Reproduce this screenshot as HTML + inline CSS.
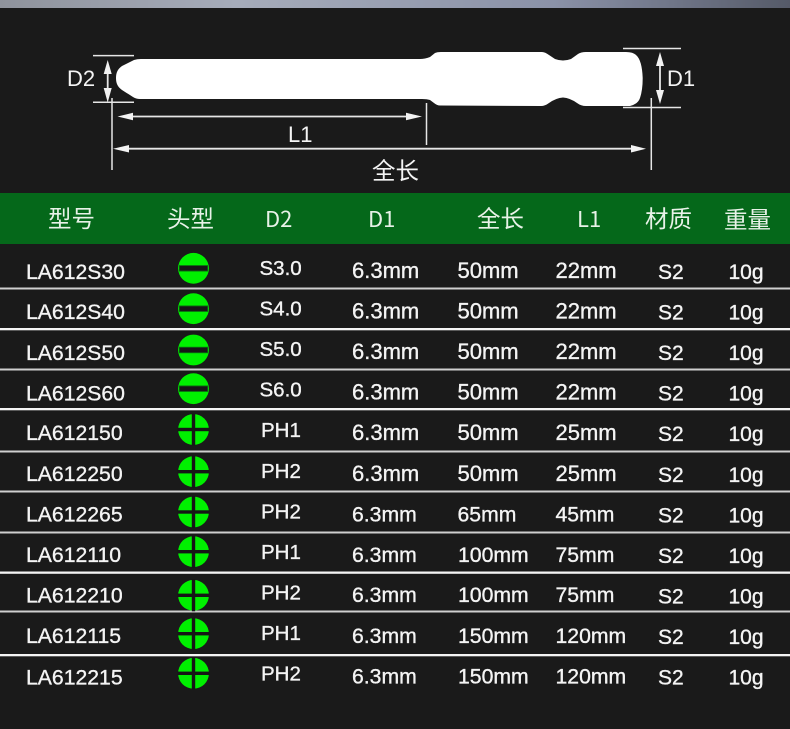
<!DOCTYPE html>
<html lang="zh"><head><meta charset="utf-8"><style>
html,body{margin:0;padding:0;background:#1a1a1a}
svg{display:block}
text{font-family:"Liberation Sans","Noto Sans CJK SC",sans-serif;fill:#f4f4f4}
.d text{stroke:#f4f4f4;stroke-width:.35}
.d .x{font-size:22px}
.d .y{font-size:21.2px}
.d .z{font-size:20.5px}
.d .w{font-size:21px}
.h text{font-size:23.5px;fill:#e8f2e8}
.h .n{font-family:"Noto Sans CJK SC",sans-serif;font-size:22px}
.a{fill:#f2f2f2}
</style></head><body>
<svg width="790" height="729" viewBox="0 0 790 729" xmlns="http://www.w3.org/2000/svg">
<defs>
<linearGradient id="g" x1="0" x2="1" y1="0" y2="0"><stop offset="0" stop-color="#8f939c"/><stop offset=".3" stop-color="#a6acba"/><stop offset=".7" stop-color="#8b92a8"/><stop offset="1" stop-color="#555a68"/></linearGradient>
<g id="s"><circle r="15.4" fill="#00f000"/><rect x="-14.500" y="-3.200" width="29" height="6.400" fill="#0c6a12"/><rect x="-13.800" y="-2.300" width="27.600" height="4.600" fill="#161616"/></g>
<g id="p"><circle r="15.400" fill="#00f000"/><rect x="-1.700" y="-16" width="3.400" height="32" fill="#161616"/><rect x="-16" y="-1.700" width="32" height="3.400" fill="#161616"/></g>
</defs>
<rect width="790" height="729" fill="#1a1a1a"/>
<rect width="790" height="8" fill="url(#g)"/>
<rect y="193" width="790" height="51" fill="#05681a"/>

<path fill="#fff" d="M116 78C116 72 118 69 122 66L134 60Q137 59 141 59L420 59Q425 59 430 57L435 53Q437 52 441 52L542 52Q545 52 549 55L555 59Q563 62 571 59L578 54Q581 52 586 52L626 52Q633 52 636 55Q642 60 642.700 78Q642.700 90 640 98Q638 104 630 106L586 106Q581 106 577 103Q570 98 563 97.500Q556 98 549 103Q545 106 541 106L440 105.500Q437 105.500 434 103L430 100Q427 99 422 99L140 99Q136 99 133 97L122 90C118 87 116 84 116 78Z"/>

<g fill="none" stroke="#e6e6e6" stroke-width="1.500">
<path d="M93 55.600H134M93 102.300H134M112 98V170M426.500 103V145M651.300 98V170M623 48.500H681M623 107.500H681"/>
<path stroke-width="1.800" d="M107.700 66V96M660 60V98M125 116.500H416M122 148.700H638"/>
</g>
<g class="a">
<path d="M107.700 60L103.700 74H111.700ZM107.700 102.500L103.700 88H111.700Z"/>
<path d="M660 52L656 66H664ZM660 104L656 90H664Z"/>
<path d="M117.500 116.500L133 112.800V120.200ZM422 116.500L406 112.800V120.200Z"/>
<path d="M113 148.700L129 145V152.500ZM646 148.700L631 145V152.500Z"/>
</g>
<text x="67" y="86" font-size="22">D2</text>
<text x="667" y="86" font-size="22">D1</text>
<text x="288" y="142" font-size="22">L1</text>
<text x="372" y="179" font-size="23.500">全长</text>

<g class="h">
<text x="48" y="227">型号</text>
<text x="167" y="227">头型</text>
<text class="n" x="265" y="227">D2</text>
<text class="n" x="368" y="227">D1</text>
<text x="477" y="227">全长</text>
<text class="n" x="577" y="227">L1</text>
<text x="645" y="227">材质</text>
<text x="724" y="228">重量</text>
</g>

<g fill="#cfcfcf">
<rect y="287.500" width="790" height="2"/><rect y="368.500" width="790" height="2"/><rect y="450.500" width="790" height="2"/><rect y="490.500" width="790" height="2"/><rect y="531.500" width="790" height="2"/><rect y="610.500" width="790" height="2"/>
</g>
<g fill="#f4f4f4">
<rect y="328" width="790" height="2.300"/><rect y="408" width="790" height="2.300"/><rect y="571.500" width="790" height="2.300"/><rect y="654" width="790" height="2.300"/>
</g>

<use href="#s" x="193.500" y="268.300"/>
<use href="#s" x="193.500" y="308.700"/>
<use href="#s" x="193.500" y="350"/>
<use href="#s" x="193.500" y="388.700"/>
<use href="#p" x="193.500" y="429.500"/>
<use href="#p" x="193.500" y="471.700"/>
<use href="#p" x="193.500" y="512"/>
<use href="#p" x="193.500" y="551.700"/>
<use href="#p" x="193.500" y="595.300"/>
<use href="#p" x="193.500" y="633.700"/>
<use href="#p" x="193.500" y="673.300"/>

<g class="d">
<g transform="translate(0,279)"><text class="y" x="26" y="0">LA612S30</text><text class="z" x="259.500" y="-4">S3.0</text><text class="x" x="352" y="-1">6.3mm</text><text class="x" x="457.500" y="-1">50mm</text><text class="x" x="555.500" y="-1">22mm</text><text class="w" x="658" y="0">S2</text><text class="w" x="728.500" y="0">10g</text></g>
<g transform="translate(0,319.500)"><text class="y" x="26" y="-0.500">LA612S40</text><text class="z" x="259.500" y="-4">S4.0</text><text class="x" x="352" y="-1">6.3mm</text><text class="x" x="457.500" y="-1">50mm</text><text class="x" x="555.500" y="-1">22mm</text><text class="w" x="658" y="0">S2</text><text class="w" x="728.500" y="0">10g</text></g>
<g transform="translate(0,360)"><text class="y" x="26" y="0">LA612S50</text><text class="z" x="259.500" y="-4">S5.0</text><text class="x" x="352" y="-1">6.3mm</text><text class="x" x="457.500" y="-1">50mm</text><text class="x" x="555.500" y="-1">22mm</text><text class="w" x="658" y="0">S2</text><text class="w" x="728.500" y="0">10g</text></g>
<g transform="translate(0,400.500)"><text class="y" x="26" y="0">LA612S60</text><text class="z" x="259.500" y="-4">S6.0</text><text class="x" x="352" y="-1">6.3mm</text><text class="x" x="457.500" y="-1">50mm</text><text class="x" x="555.500" y="-1">22mm</text><text class="w" x="658" y="0">S2</text><text class="w" x="728.500" y="0">10g</text></g>
<g transform="translate(0,441)"><text class="y" x="26" y="-1">LA612150</text><text class="z" x="261" y="-4">PH1</text><text class="x" x="352" y="-1">6.3mm</text><text class="x" x="457.500" y="-1">50mm</text><text class="x" x="555.500" y="-1">25mm</text><text class="w" x="658" y="0">S2</text><text class="w" x="728.500" y="0">10g</text></g>
<g transform="translate(0,482)"><text class="y" x="26" y="-1">LA612250</text><text class="z" x="261" y="-4">PH2</text><text class="x" x="352" y="-1">6.3mm</text><text class="x" x="457.500" y="-1">50mm</text><text class="x" x="555.500" y="-1">25mm</text><text class="w" x="658" y="0">S2</text><text class="w" x="728.500" y="0">10g</text></g>
<g transform="translate(0,522.500)"><text class="y" x="26" y="-1">LA612265</text><text class="z" x="261" y="-4">PH2</text><text class="y" x="352" y="-1">6.3mm</text><text class="y" x="457.500" y="-1">65mm</text><text class="y" x="555.500" y="-1">45mm</text><text class="w" x="658" y="0">S2</text><text class="w" x="728.500" y="0">10g</text></g>
<g transform="translate(0,563)"><text class="y" x="26" y="-1">LA612110</text><text class="z" x="261" y="-4">PH1</text><text class="y" x="352" y="-1">6.3mm</text><text class="y" x="458" y="-1">100mm</text><text class="y" x="555.500" y="-1">75mm</text><text class="w" x="658" y="0">S2</text><text class="w" x="728.500" y="0">10g</text></g>
<g transform="translate(0,603.500)"><text class="y" x="26" y="-1">LA612210</text><text class="z" x="261" y="-4">PH2</text><text class="y" x="352" y="-1.500">6.3mm</text><text class="y" x="458" y="-1.500">100mm</text><text class="y" x="555.500" y="-1.500">75mm</text><text class="w" x="658" y="0">S2</text><text class="w" x="728.500" y="0">10g</text></g>
<g transform="translate(0,644)"><text class="y" x="26" y="-1">LA612115</text><text class="z" x="261" y="-4">PH1</text><text class="y" x="352" y="-1">6.3mm</text><text class="y" x="458" y="-1">150mm</text><text class="y" x="555.500" y="-1">120mm</text><text class="w" x="658" y="0">S2</text><text class="w" x="728.500" y="0">10g</text></g>
<g transform="translate(0,684.500)"><text class="y" x="26" y="0">LA612215</text><text class="z" x="261" y="-4">PH2</text><text class="y" x="352" y="-1">6.3mm</text><text class="y" x="458" y="-1">150mm</text><text class="y" x="555.500" y="-1">120mm</text><text class="w" x="658" y="0">S2</text><text class="w" x="728.500" y="0">10g</text></g>
</g>
</svg>
</body></html>
